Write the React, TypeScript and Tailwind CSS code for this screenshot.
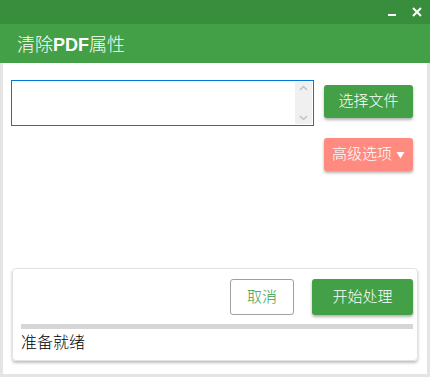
import React from "react";

const font = { fontFamily: '"Liberation Sans", "Noto Sans CJK SC", sans-serif' };

const App = () => {
  return (
    <div
      className="w-[430px] h-[377px] flex flex-col bg-white overflow-hidden font-light"
      style={font}
    >
      {/* window chrome */}
      <div className="h-[24px] bg-[#388e3c] flex items-center justify-end pr-[8px] gap-[16px] shrink-0">
        <span className="w-[8px] h-[2px] bg-white mt-[5px]" />
        <svg width="10" height="10" viewBox="0 0 10 10">
          <path d="M1 1L9 9M9 1L1 9" stroke="white" strokeWidth="2" />
        </svg>
      </div>
      <div className="h-[39px] bg-[#43a047] flex items-center pl-[17px] shrink-0">
        <h1 className="text-white text-[18px] leading-none mt-[2px]">
          清除<span className="font-bold">PDF</span>属性
        </h1>
      </div>

      <div className="flex-1 flex flex-col border-x-[3px] border-b-[3px] border-[#e4e4e4] px-[8px] pt-[17px] pb-[13px]">
        <div className="flex gap-[10px]">
          <div className="w-[303px] h-[46px] border border-[#0078d7] flex justify-end p-[1px]">
            <div className="w-[17px] h-full bg-[#f0f0f0] flex flex-col items-center justify-between py-[3px]">
              <svg width="9" height="6" viewBox="0 0 9 6">
                <path d="M1 5L4.5 1.5L8 5" stroke="#c2c2c2" strokeWidth="1.5" fill="none" />
              </svg>
              <svg width="9" height="6" viewBox="0 0 9 6">
                <path d="M1 1L4.5 4.5L8 1" stroke="#c2c2c2" strokeWidth="1.5" fill="none" />
              </svg>
            </div>
          </div>
          <div className="flex flex-col gap-[20px] pt-[5px]">
            <button className="w-[89px] h-[33px] rounded-[3px] bg-[#43a047] text-white text-[15px] shadow-[0_2px_3px_rgba(0,0,0,0.3)]">
              选择文件
            </button>
            <button className="w-[89px] h-[33px] rounded-[3px] bg-[#ff8a80] text-white text-[15px] shadow-[0_2px_3px_rgba(0,0,0,0.3)] flex items-center justify-center gap-[4px]">
              高级选项
              <svg width="9" height="8" viewBox="0 0 9 8">
                <path d="M0.5 1H8.5L4.5 7.5Z" fill="white" />
              </svg>
            </button>
          </div>
        </div>

        <div className="mt-auto ml-[1px] w-[406px] h-[93px] rounded-[4px] border border-[#e2e2e2] shadow-[0_2px_3px_rgba(0,0,0,0.25)] flex flex-col pl-[8px] pr-[4px] pt-[10px]">
          <div className="flex justify-end gap-[18px]">
            <button className="w-[64px] h-[36px] rounded-[3px] border border-[#a0a0a0] text-[#3a9a3f] text-[15px] bg-white">
              取消
            </button>
            <button className="w-[101px] h-[36px] rounded-[3px] bg-[#43a047] text-white text-[15px] shadow-[0_2px_3px_rgba(0,0,0,0.3)]">
              开始处理
            </button>
          </div>
          <div className="mt-[9px] h-[5px] bg-[#d6d6d6]" />
          <div className="mt-[5px] text-[16px] leading-[18px] text-black">准备就绪</div>
        </div>
      </div>
    </div>
  );
};

export default App;
